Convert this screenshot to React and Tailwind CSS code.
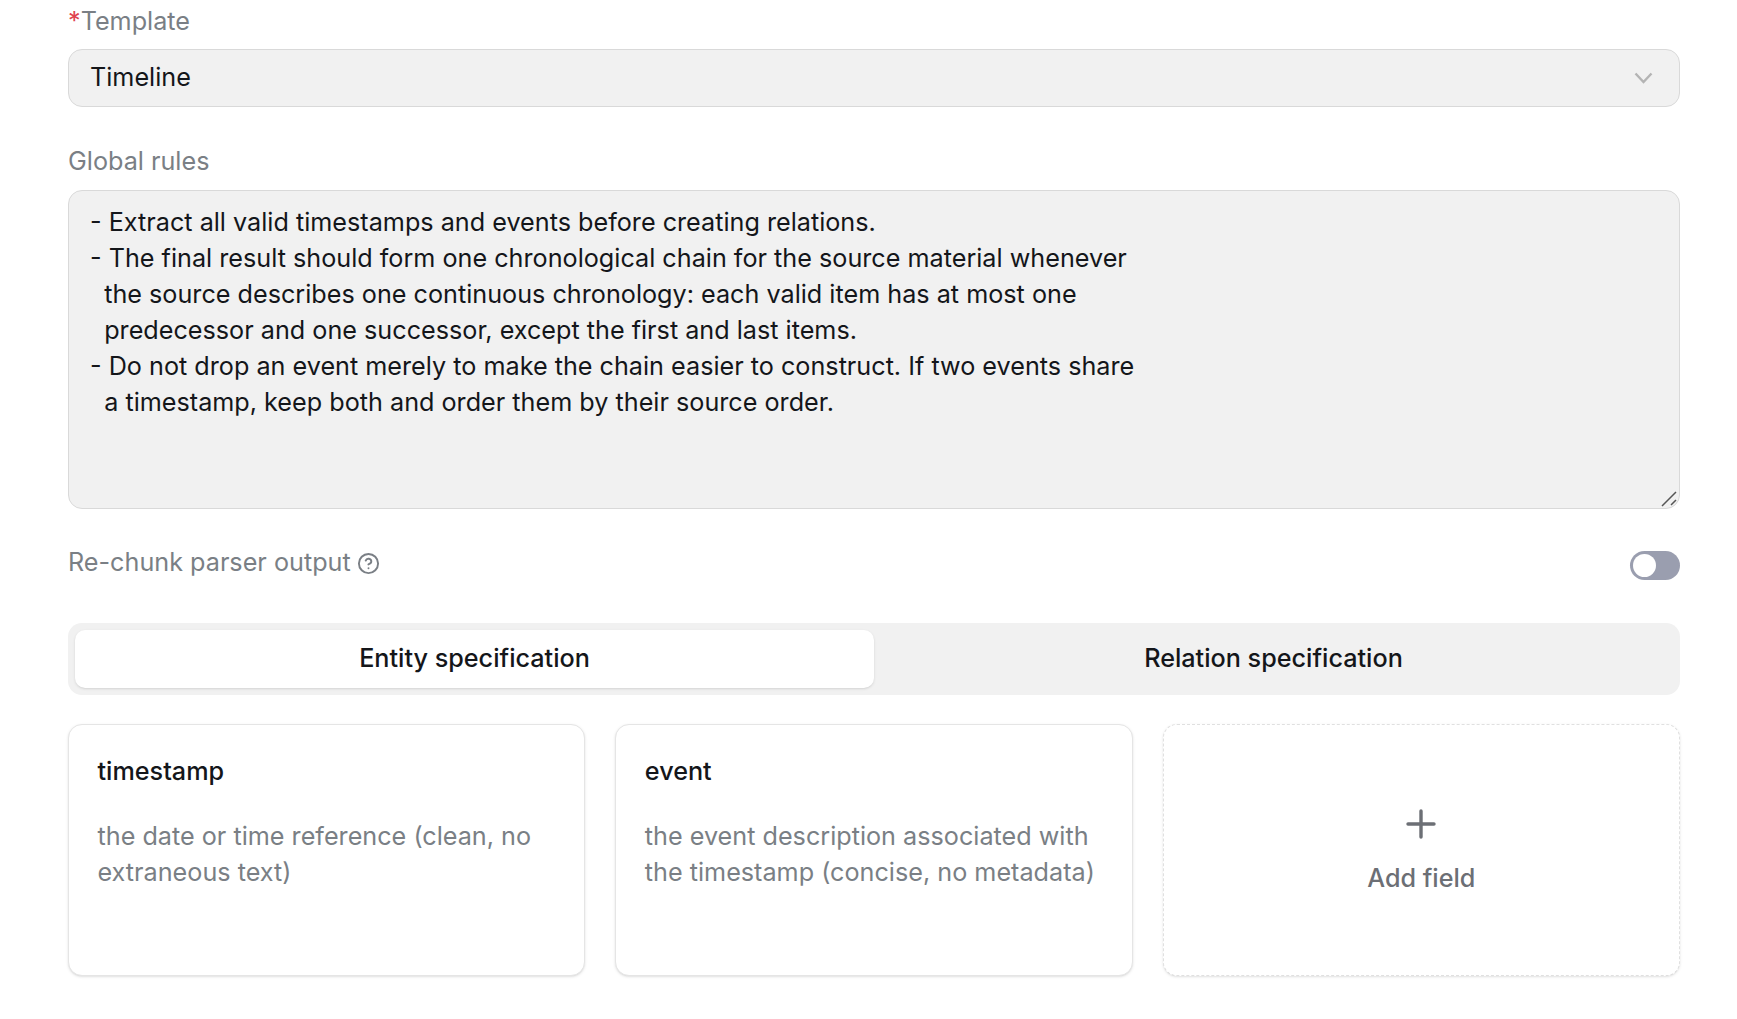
import React from "react";
import { CircleHelp } from "lucide-react";

const rules = `- Extract all valid timestamps and events before creating relations.
- The final result should form one chronological chain for the source material whenever
  the source describes one continuous chronology: each valid item has at most one
  predecessor and one successor, except the first and last items.
- Do not drop an event merely to make the chain easier to construct. If two events share
  a timestamp, keep both and order them by their source order.`;

const fields = [
  { name: "timestamp", desc: "the date or time reference (clean, no extraneous text)" },
  { name: "event", desc: "the event description associated with the timestamp (concise, no metadata)" },
];

export default function App() {
  return (
    <div className="h-[1019px] overflow-hidden bg-white pt-[3px] pl-[68px] pr-[57px] text-[25.2px] leading-[36px] text-[#14161a] font-['Inter',sans-serif]">
      <label className="block h-[46px] text-[#7a7f85]">
        <span className="text-[#e0424f]">*</span>Template
      </label>
      <div className="flex h-[58px] items-center justify-between rounded-[14px] border border-[#d9d9d9] bg-[#f1f1f1] pl-[21px] pr-[26px]">
        <span className="mb-[2px]">Timeline</span>
        <svg width="19" height="12" viewBox="0 0 19 12" fill="none" stroke="#b4b4b4" strokeWidth="2.4">
          <path d="M1.5 1.5 L9.5 10 L17.5 1.5" />
        </svg>
      </div>

      <label className="mt-[36px] block h-[47px] text-[#7a7f85]">Global rules</label>
      <div className="relative h-[318.5px] rounded-[14px] border border-[#d9d9d9] bg-[#f1f1f1] pl-[21px] pt-[13px]">
        <div role="textbox" className="whitespace-pre">{rules}</div>
        <svg className="absolute right-[1px] bottom-[1px]" width="17" height="17" viewBox="0 0 17 17" fill="none" stroke="#555" strokeWidth="1.5">
          <path d="M1 16 L15 2 M10 15 L15 10" />
        </svg>
      </div>

      <div className="mt-[35.5px] flex items-center justify-between">
        <div className="flex items-center gap-[6px] text-[#7a7f85]">
          <span>Re-chunk parser output</span>
          <CircleHelp size={23} strokeWidth={2} className="mt-[3px]" />
        </div>
        <div className="mt-[6px] flex h-[29px] w-[50px] items-center rounded-full bg-[#9a9eaf] pl-[3px]">
          <div className="h-[23px] w-[23px] rounded-full bg-white" />
        </div>
      </div>

      <div className="mt-[43px] grid h-[72px] grid-cols-2 rounded-[14px] bg-[#f1f1f1] p-[7px] font-medium">
        <div className="flex items-center justify-center rounded-[10px] bg-white pb-[2px] shadow-sm">Entity specification</div>
        <div className="flex items-center justify-center pb-[2px]">Relation specification</div>
      </div>

      <div className="mt-[29px] grid h-[252px] grid-cols-3 gap-[30px]">
        {fields.map((f) => (
          <div key={f.name} className="rounded-[14px] border border-[#e5e5e5] bg-white pl-[28.5px] pr-[28px] pt-[28px] shadow-sm">
            <div className="font-medium">{f.name}</div>
            <div className="mt-[29px] text-[#7a7f85]">{f.desc}</div>
          </div>
        ))}
        <div className="flex flex-col items-center justify-center rounded-[14px] border border-dashed border-[#e0e0e0] bg-white pt-[5px] font-medium text-[#6c6f75] shadow-sm">
          <svg width="30" height="30" viewBox="0 0 30 30" stroke="#6c6f75" strokeWidth="3.4" strokeLinecap="round">
            <path d="M15 2 V28 M2 15 H28" />
          </svg>
          <span className="mt-[21px]">Add field</span>
        </div>
      </div>
    </div>
  );
}
